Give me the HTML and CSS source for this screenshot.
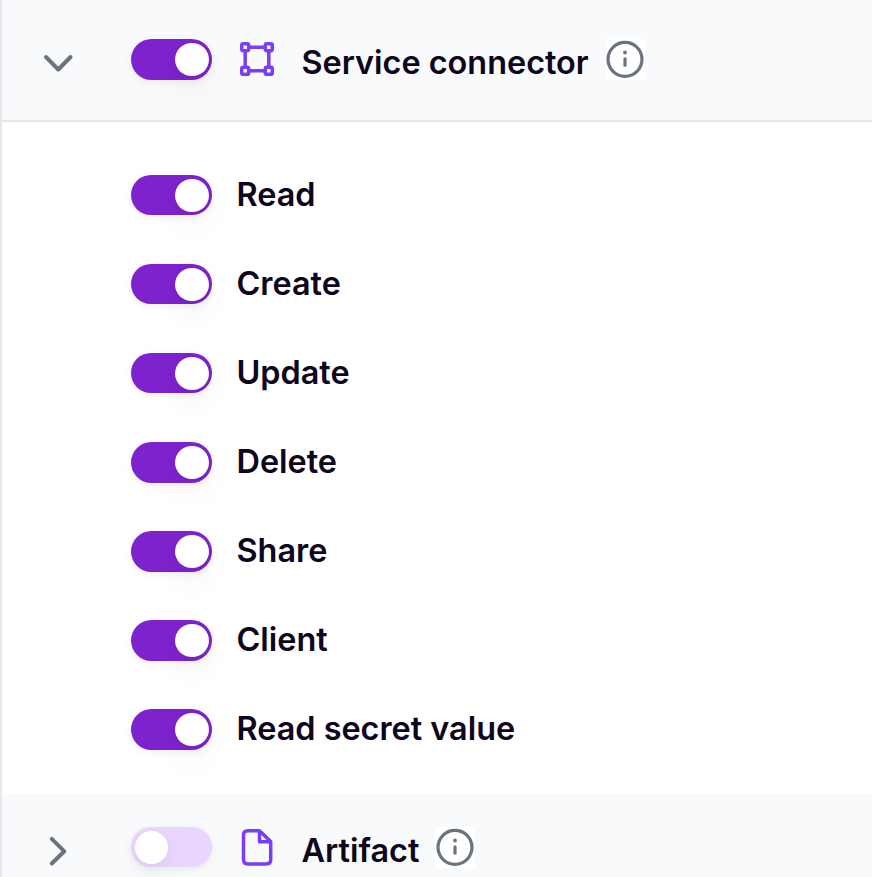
FILE: index.html
```html
<!DOCTYPE html>
<html lang="en">
<head>
<meta charset="utf-8">
<title>Permissions</title>
<link rel="stylesheet" href="styles.css">
</head>
<body>
<main class="panel">
  <header class="group group-open">
    <svg class="chevron" viewBox="0 0 40 40"><path d="M8 14 20.3 26.500 32.500 14"/></svg>
    <span class="toggle on"><span class="knob"></span></span>
    <svg class="icon" viewBox="0 0 40 40"><path d="M12 8.200H28M12 31.800H28M8.200 12V28M31.800 12V28"/><rect x="4.700" y="4.700" width="7" height="7" rx="1.600"/><rect x="28.300" y="4.700" width="7" height="7" rx="1.600"/><rect x="4.700" y="28.300" width="7" height="7" rx="1.600"/><rect x="28.300" y="28.300" width="7" height="7" rx="1.600"/></svg>
    <h2 class="title">Service connector</h2>
    <svg class="info" viewBox="0 0 40 41"><circle cx="20" cy="20.300" r="17"/><path d="M20 19.800V26.200"/><circle class="dot" cx="20" cy="13.500" r="1.900"/></svg>
  </header>
  <ul class="permissions">
    <li><span class="toggle on"><span class="knob"></span></span><span class="label">Read</span></li>
    <li><span class="toggle on"><span class="knob"></span></span><span class="label">Create</span></li>
    <li><span class="toggle on"><span class="knob"></span></span><span class="label">Update</span></li>
    <li><span class="toggle on"><span class="knob"></span></span><span class="label">Delete</span></li>
    <li><span class="toggle on"><span class="knob"></span></span><span class="label">Share</span></li>
    <li><span class="toggle on"><span class="knob"></span></span><span class="label">Client</span></li>
    <li><span class="toggle on"><span class="knob"></span></span><span class="label">Read secret value</span></li>
  </ul>
  <header class="group">
    <svg class="chevron" viewBox="0 0 40 40"><path d="M13.800 7.800 26.300 20.300 13.800 32.500"/></svg>
    <span class="toggle"><span class="knob"></span></span>
    <svg class="icon" viewBox="0 0 40 40"><path d="M22.500 3.700H11Q6.500 3.700 6.500 8.200V32.500Q6.500 37 11 37H29.200Q33.700 37 33.700 32.500V14.500Z"/><path d="M22.500 4V14.800H33.500"/></svg>
    <h2 class="title">Artifact</h2>
    <svg class="info" viewBox="0 0 40 41"><circle cx="20" cy="20.300" r="17"/><path d="M20 19.800V26.200"/><circle class="dot" cx="20" cy="13.500" r="1.900"/></svg>
  </header>
</main>
</body>
</html>
```
FILE: styles.css
```css
* {
  box-sizing: border-box;
}

body {
  margin: 0;
  overflow: hidden;
  background: #fff;
  color: #0d061d;
  font-family: Inter, "Liberation Sans", sans-serif;
  font-size: 32.4px;
  font-weight: 600;
  line-height: 40px;
}

.panel {
  height: 877px;
  overflow: hidden;
  border-left: 2px solid #e5e7eb;
}

.group {
  display: flex;
  align-items: flex-start;
  height: 122px;
  padding: 33px 0 0 36px;
  background: #f9fafc;
}

.group-open {
  padding-top: 39px;
  border-bottom: 2px solid #e5e7eb;
}

.group-open .toggle {
  height: 41px;
}

.chevron {
  width: 40px;
  height: 40px;
  margin: 4px 53px 0 0;
  fill: none;
  stroke: #6b7280;
  stroke-width: 4;
  stroke-linecap: round;
  stroke-linejoin: round;
}

.toggle {
  display: flex;
  flex: none;
  align-items: center;
  width: 81px;
  height: 40.400px;
  padding: 0 3.500px;
  border-radius: 21px;
  background: #e9d5ff;
  box-shadow: 0 2px 8px rgb(0 0 0 / 7%);
}

.toggle.on {
  justify-content: flex-end;
  background: #7e22ce;
}

.knob {
  width: 33.500px;
  height: 33px;
  border-radius: 50%;
  background: #fff;
  box-shadow: 0 16px 28px rgb(0 0 0 / 4%), 0 2px 10px rgb(0 0 0 / 3%);
}

.icon {
  width: 40px;
  height: 40px;
  margin-left: 25px;
  fill: none;
  stroke: #7b3df5;
  stroke-width: 3.500;
  stroke-linejoin: round;
}

.title {
  margin: 4px 0 0 24.500px;
  font: inherit;
}

.info {
  width: 40px;
  height: 41px;
  margin-left: 16.500px;
  background: #fff;
  fill: none;
  stroke: #6b7280;
  stroke-width: 3.200;
  stroke-linecap: round;
}

.group:not(.group-open) .info {
  margin-left: 16px;
}

.info .dot {
  fill: #6b7280;
  stroke: none;
}

.permissions {
  display: grid;
  grid-auto-rows: 40.400px;
  row-gap: 48.670px;
  height: 672px;
  margin: 0;
  padding: 53px 0 0 129px;
  list-style: none;
}

.permissions li {
  display: flex;
  align-items: flex-start;
  gap: 24.500px;
}
```
